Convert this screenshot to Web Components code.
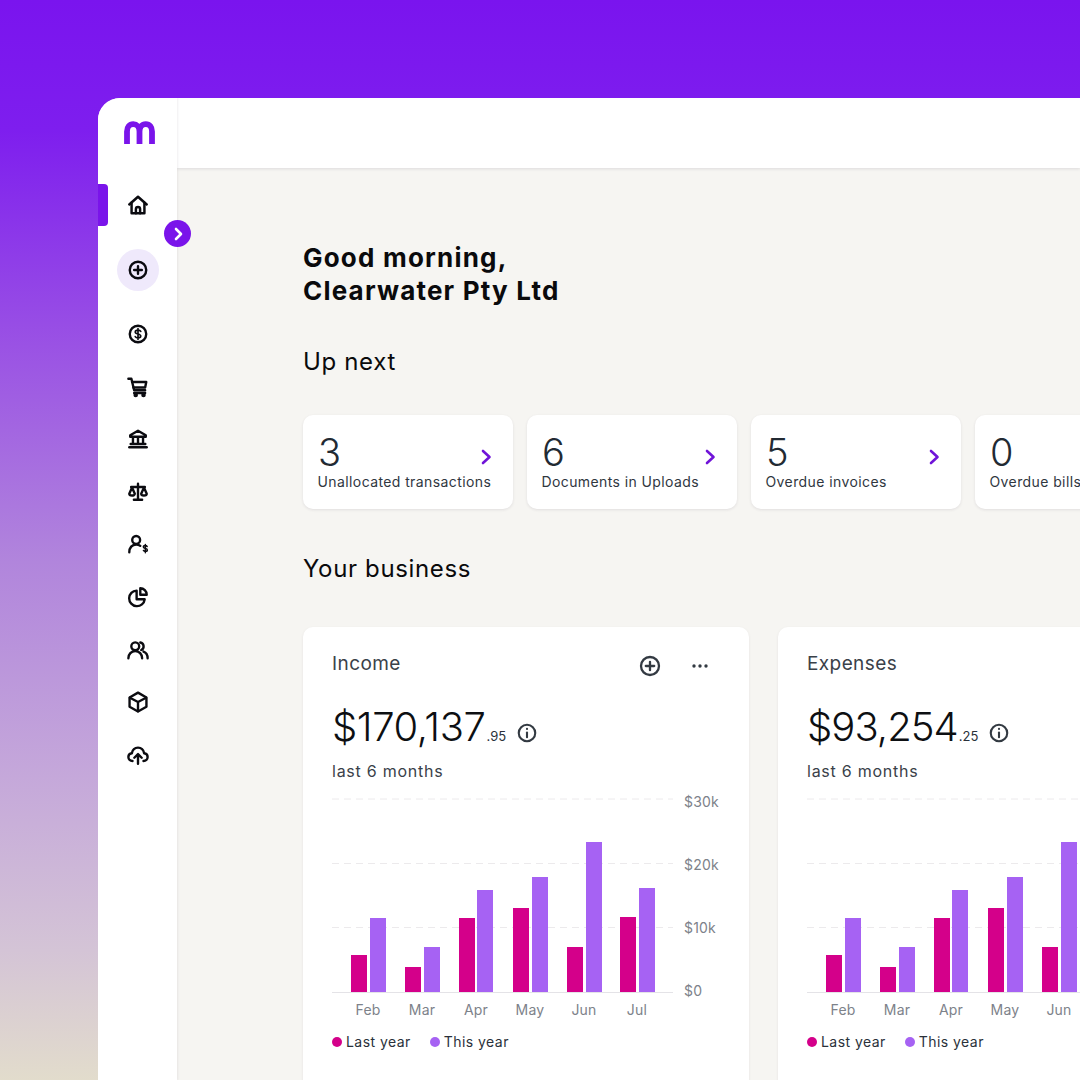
<!DOCTYPE html>
<html>
<head>
<meta charset="utf-8">
<title>Dashboard</title>
<style>
  html, body { margin: 0; height: 100%; }
  body {
    height: 1080px;
    overflow: hidden;
    font-family: Inter, "Liberation Sans", sans-serif;
    background: linear-gradient(180deg, #7a14ee 0%, #7e1eee 12%, #9a52e4 32%, #b185dc 52%, #c5a8da 72%, #d4c4d6 88%, #e2dccc 100%);
  }
</style>
</head>
<body>
<app-shell>
  <side-nav slot="nav"></side-nav>
  <h-greeting greeting="Good morning," name="Clearwater Pty Ltd"></h-greeting>
  <section-title style="margin-top:39px">Up next</section-title>
  <card-row style="margin-top:37px;gap:14px">
    <next-card count="3" label="Unallocated transactions"></next-card>
    <next-card count="6" label="Documents in Uploads"></next-card>
    <next-card count="5" label="Overdue invoices"></next-card>
    <next-card count="0" label="Overdue bills"></next-card>
  </card-row>
  <section-title style="margin-top:44px">Your business</section-title>
  <card-row style="margin-top:42px;gap:29px">
    <stat-card title="Income" dollars="$170,137" cents=".95"></stat-card>
    <stat-card title="Expenses" dollars="$93,254" cents=".25" style="--amount-tracking:-.95px"></stat-card>
  </card-row>
</app-shell>

<script>
// shared icon paths, all on a 24 box
const ICONS = {
  home: '<path d="M2.5 11.5 12 3l9.5 8.5"/><path d="M5 9.5V21h14V9.5"/><path d="M9.7 21v-4.5a2.3 2.3 0 0 1 4.6 0V21"/>',
  plus: '<circle cx="12" cy="12" r="9"/><path d="M12 7.8v8.4M7.8 12h8.4"/>',
  dollar: '<circle cx="12" cy="12" r="9"/><path d="M15 9.2c-.5-1-1.6-1.5-3-1.5-1.7 0-3 .8-3 2.1 0 2.9 6 1.4 6 4.4 0 1.3-1.300 2.100-3 2.100-1.400 0-2.500-.5-3-1.500M12 6v12" stroke-width="1.800"/>',
  cart: '<path d="M1.500 3h3.300l3 12.500h12"/><path d="M5.500 6.500H21l-1.200 6H7"/><path d="M7.800 18.500h12"/><circle cx="9.500" cy="20.800" r="1.200"/><circle cx="18" cy="20.800" r="1.200"/>',
  bank: '<path d="M12 3 3.500 8v1.500h17V8z"/><path d="M6.500 10v7M12 10v7M17.500 10v7M4 17.500h16"/><path d="M2.500 21h19"/>',
  scale: '<path d="M12 3v17M7.500 20.500h9M4.500 6.500h15"/><path d="M5.500 7 2.500 14c0 2.500 6 2.500 6 0zM18.500 7l-3 7c0 2.500 6 2.500 6 0z"/>',
  person: '<circle cx="10" cy="7.500" r="4.300"/><path d="M2.500 21c0-5 3-8.500 7.500-8.500 1.800 0 3.300.5 4.500 1.500"/><path d="M22 14.800c-.4-.8-1.200-1.100-2-1.100-1.200 0-2.200.6-2.200 1.600 0 2.100 4.400 1.100 4.400 3.200 0 1-1 1.600-2.200 1.600-.9 0-1.700-.4-2.100-1.100M20 12.500v9" stroke-width="1.600"/>',
  pie: '<path d="M10.500 5a8.500 8.500 0 1 0 8.800 9.500H10.500z"/><path d="M14.500 2.500a7 7 0 0 1 7 7h-7z"/>',
  users: '<circle cx="9" cy="8" r="4.300"/><path d="M1.500 21c0-4.500 3.200-7.800 7.500-7.800s7.500 3.300 7.500 7.800"/><path d="M14.500 3.800a4.300 4.300 0 0 1 1 8.200M18 13.700c2.700 1 4.500 3.800 4.500 7.300"/>',
  box: '<path d="M12 1.800 21.200 7v10.200L12 22.400l-9.200-5.200V7z"/><path d="M3.200 7.300 12 12l8.800-4.700M12 12v10"/>',
  upload: '<path d="M6 18.500c-2.500 0-4.500-1.800-4.500-4.200 0-2.200 1.600-4 3.800-4.200C6 6.500 8.700 4 12 4s6 2.500 6.700 6.100c2.200.2 3.800 2 3.800 4.200 0 2.400-2 4.200-4.500 4.200"/><path d="M12 21.500V11.500M8 15l4-4 4 4"/>',
  info: '<circle cx="12" cy="12" r="9"/><path d="M12 11.500v5"/><path d="M12 7.500v.2"/>'
};
const icon = (name, size, sw) => `<svg width="${size}" height="${size}" viewBox="0 0 24 24" fill="none" stroke="currentColor" stroke-width="${sw}" stroke-linecap="round" stroke-linejoin="round">${ICONS[name]}</svg>`;

class AppShell extends HTMLElement {
  constructor() {
    super();
    this.attachShadow({ mode: 'open' }).innerHTML = `
      <style>
        :host { display: flex; margin: 98px 0 0 98px; width: 982px; height: 982px; border-radius: 22px 0 0 0; overflow: hidden; background: #f6f5f2; }
        .body { flex: 1; min-width: 0; display: flex; flex-direction: column; }
        .top { height: 70px; flex: none; background: #fff; box-shadow: 0 1px 3px rgba(40,30,60,.12); }
        .content { flex: 1; padding: 73px 0 0 126px; overflow: hidden; }
      </style>
      <slot name="nav"></slot>
      <div class="body">
        <div class="top"></div>
        <div class="content"><slot></slot></div>
      </div>`;
  }
}

class SideNav extends HTMLElement {
  constructor() {
    super();
    const names = ['dollar', 'cart', 'bank', 'scale', 'person', 'pie', 'users', 'box', 'upload'];
    this.attachShadow({ mode: 'open' }).innerHTML = `
      <style>
        :host { display: flex; flex-direction: column; align-items: center; position: relative; flex: none; width: 79px; height: 100%; background: #fff; box-shadow: 1px 0 2px rgba(40,30,60,.07); color: #0b0b10; z-index: 1; }
        .logo { height: 23px; margin-top: 23px; margin-left: 3px; color: #7a14ea; }
        .home { margin-top: 50px; height: 22px; }
        .add { margin-top: 33px; width: 42px; height: 42px; border-radius: 50%; background: #efe9fb; display: flex; align-items: center; justify-content: center; }
        .list { margin-top: 32px; display: flex; flex-direction: column; gap: 30.6px; }
        .list div { height: 22px; display: flex; justify-content: center; }
        svg { display: block; }
        .marker { position: absolute; left: 0; top: 86px; width: 10px; height: 42px; background: #7a14ea; border-radius: 0 4px 4px 0; }
        .toggle { position: absolute; left: 66px; top: 122px; width: 27px; height: 27px; border-radius: 50%; background: #7a14ea; color: #fff; display: flex; align-items: center; justify-content: center; }
      </style>
      <div class="logo">
        <svg width="31" height="23" viewBox="0 0 31 23" fill="none" stroke="currentColor" stroke-width="5.800">
          <path d="M3 23V10.500C3 6 5.500 3.200 9.200 3.200S15.500 6 15.500 10.500V23M15.500 10.500C15.500 6 18 3.200 21.800 3.200S28 6 28 10.500V23"/>
        </svg>
      </div>
      <div class="marker"></div>
      <div class="home">${icon('home', 22, 2.7)}</div>
      <div class="add">${icon('plus', 22, 2.6)}</div>
      <div class="list">${names.map(n => `<div>${icon(n, 22, 2.6)}</div>`).join('')}</div>
      <div class="toggle"><svg width="14" height="14" viewBox="0 0 14 14" fill="none" stroke="currentColor" stroke-width="2.600" stroke-linecap="round" stroke-linejoin="round"><path d="M5 2l5 5-5 5"/></svg></div>`;
  }
}

class HGreeting extends HTMLElement {
  connectedCallback() {
    this.attachShadow({ mode: 'open' }).innerHTML = `
      <style>
        :host { display: block; }
        h1 { margin: 0; font: 700 26px/33px Inter, sans-serif; letter-spacing: 1.2px; color: #0a0a0c; }
      </style>
      <h1>${this.getAttribute('greeting')}<br>${this.getAttribute('name')}</h1>`;
  }
}

class SectionTitle extends HTMLElement {
  constructor() {
    super();
    this.attachShadow({ mode: 'open' }).innerHTML = `
      <style>
        :host { display: block; font: 400 24px/32px Inter, sans-serif; letter-spacing: .65px; color: #0a0a0c; }
      </style>
      <slot></slot>`;
  }
}

class CardRow extends HTMLElement {
  constructor() {
    super();
    this.attachShadow({ mode: 'open' }).innerHTML = `
      <style>:host { display: flex; width: 1000px; }</style><slot></slot>`;
  }
}

class NextCard extends HTMLElement {
  connectedCallback() {
    this.attachShadow({ mode: 'open' }).innerHTML = `
      <style>
        :host { display: block; position: relative; flex: none; box-sizing: border-box; width: 210px; height: 94px; padding: 17px 15px 0; background: #fff; border-radius: 10px; box-shadow: 0 1px 3px rgba(40,30,60,.1); color: #222a33; }
        .n { font: 300 38px/40px Inter, sans-serif; }
        .l { font: 400 14px/18px Inter, sans-serif; letter-spacing: .4px; color: #30373f; white-space: nowrap; margin-top: 1px; margin-left: -.5px; }
        .row { display: flex; justify-content: space-between; align-items: center; }
        svg { display: block; color: #7014d8; margin-top: 9px; margin-right: 5px; }
      </style>
      <div class="row">
        <div class="n">${this.getAttribute('count')}</div>
        <svg width="14" height="18" viewBox="0 0 14 18" fill="none" stroke="currentColor" stroke-width="2.600" stroke-linecap="round" stroke-linejoin="round"><path d="M4 3l6.500 6L4 15"/></svg>
      </div>
      <div class="l">${this.getAttribute('label')}</div>`;
  }
}

class StatCard extends HTMLElement {
  connectedCallback() {
    this.attachShadow({ mode: 'open' }).innerHTML = `
      <style>
        :host { display: block; flex: none; box-sizing: border-box; width: 446px; height: 500px; padding: 26px 0 0 29px; background: #fff; border-radius: 10px; box-shadow: 0 1px 3px rgba(40,30,60,.08); color: #2a313a; }
        .head { display: flex; align-items: center; height: 22px; padding-right: 40px; }
        .t { flex: 1; font: 400 19px/20px Inter, sans-serif; letter-spacing: .4px; color: #3a4149; margin-top: -1px; }
        .tools { display: flex; align-items: center; gap: 29px; margin-top: 4px; color: #333a42; }
        svg { display: block; }
        .amount { display: flex; align-items: baseline; margin-top: 28px; height: 48px; color: #0d0f12; }
        .d { font: 350 40px/48px Inter, sans-serif; letter-spacing: var(--amount-tracking, -.4px); }
        .c { font: 400 13px/16px Inter, sans-serif; margin-left: 1px; color: #2a313a; }
        .i { align-self: center; margin-left: 10px; margin-top: 12px; color: #333a42; }
        .sub { font: 400 16px/20px Inter, sans-serif; letter-spacing: .75px; margin-top: 10px; color: #3a4149; }
        bar-chart { margin-top: 18px; }
      </style>
      <div class="head">
        <div class="t">${this.getAttribute('title')}</div>
        <div class="tools">
          ${icon('plus', 24, 2.3)}
          <svg width="18" height="6" viewBox="0 0 18 6" fill="currentColor"><circle cx="3" cy="3" r="1.700"/><circle cx="9" cy="3" r="1.700"/><circle cx="15" cy="3" r="1.700"/></svg>
        </div>
      </div>
      <div class="amount">
        <span class="d">${this.getAttribute('dollars')}</span><span class="c">${this.getAttribute('cents')}</span>
        <span class="i">${icon('info', 22, 2.3)}</span>
      </div>
      <div class="sub">last 6 months</div>
      <bar-chart></bar-chart>`;
  }
}

class BarChart extends HTMLElement {
  constructor() {
    super();
    // x / top of each bar, measured from chart origin; baseline at y=193
    const bars = [
      ['Feb', 19, 156, 38, 119], ['Mar', 73, 168, 92, 148], ['Apr', 127, 119, 145, 91],
      ['May', 181, 109, 200, 78], ['Jun', 235, 148, 254, 43], ['Jul', 288, 118, 307, 89]
    ];
    const rects = bars.map(([m, x1, t1, x2, t2]) => `
      <rect x="${x1}" y="${t1}" width="16" height="${193 - t1}" fill="#d4008a"/>
      <rect x="${x2}" y="${t2}" width="16" height="${193 - t2}" fill="#a662f3"/>
      <text x="${x1 + 17}" y="216" text-anchor="middle">${m}</text>`).join('');
    const grid = [0, 64.500, 128.500].map(y => `<line x1="0" x2="341" y1="${y}" y2="${y}" stroke="#eceaec" stroke-dasharray="7 5"/>`).join('');
    const ticks = [['$30k', 8], ['$20k', 71], ['$10k', 134], ['$0', 197]].map(([t, y]) => `<text x="352" y="${y}">${t}</text>`).join('');
    this.attachShadow({ mode: 'open' }).innerHTML = `
      <style>
        :host { display: block; }
        svg { display: block; overflow: visible; }
        text { font: 400 14px Inter, sans-serif; fill: #7d828a; letter-spacing: .2px; }
        .legend { display: flex; gap: 19px; margin-top: 9px; font: 400 14px/20px Inter, sans-serif; letter-spacing: .45px; color: #2a313a; }
        .legend span { display: flex; align-items: center; gap: 4px; }
        i { width: 10px; height: 10px; border-radius: 50%; }
      </style>
      <svg width="400" height="224" viewBox="0 0 400 224">
        ${grid}
        <line x1="0" x2="341" y1="193.500" y2="193.500" stroke="#e4e3e7"/>
        ${rects}
        ${ticks}
      </svg>
      <div class="legend">
        <span><i style="background:#d4008a"></i>Last year</span>
        <span><i style="background:#a662f3"></i>This year</span>
      </div>`;
  }
}

customElements.define('app-shell', AppShell);
customElements.define('side-nav', SideNav);
customElements.define('h-greeting', HGreeting);
customElements.define('section-title', SectionTitle);
customElements.define('card-row', CardRow);
customElements.define('next-card', NextCard);
customElements.define('bar-chart', BarChart);
customElements.define('stat-card', StatCard);
</script>
</body>
</html>
